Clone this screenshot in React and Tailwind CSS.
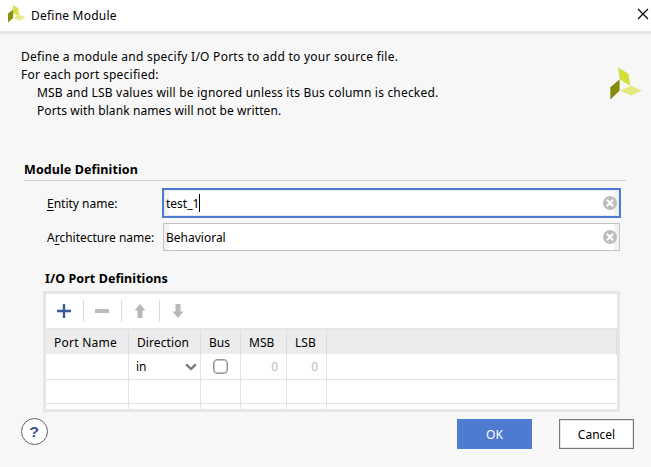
import React from "react";

function Logo({ className }) {
  return (
    <svg viewBox="0 0 33 33" className={className}>
      <polygon points="8,0.5 18.5,6.8 20.3,19 9.7,12.2" fill="#d5df3a" />
      <polygon points="0.3,20.2 9.6,12.6 9.6,23.8 0.3,32.4" fill="#848a0c" />
      <polygon points="10.2,23.6 21.2,18.8 32,23.6 21.2,28.8" fill="#e3e97c" />
    </svg>
  );
}

function TitleLogo() {
  return (
    <svg viewBox="0 0 19 18" className="h-[18px] w-[19px]">
      <polygon points="5.6,0 11.2,3 12.4,12 6.4,8.6" fill="#d9e04e" />
      <polygon points="1,8.6 6.2,4.6 6.2,12.9 1,17.4" fill="#8b910f" />
      <polygon points="6.2,12.8 12,9.2 18.8,12.4 12.4,15.8" fill="#e6eb92" />
    </svg>
  );
}

function ClearIcon() {
  return (
    <svg viewBox="0 0 14 14" className="size-3.5 shrink-0">
      <circle cx="7" cy="7" r="7" fill="#bdbdbd" />
      <path d="M3.8 3.8 10.2 10.2M10.2 3.8 3.8 10.2" stroke="#fff" strokeWidth="2" />
    </svg>
  );
}

function Tool({ children }) {
  return <div className="flex w-[37px] items-center justify-center pr-[2px]">{children}</div>;
}

const Sep = () => <div className="h-[22px] w-px shrink-0 bg-[#dadada]" />;

const COLS = "grid grid-cols-[83px_72px_40px_46px_40px_1fr]";
const HEAD = "border-r border-[#dedede]";
const CELL = "border-r border-b border-[#e4e4e4]";

export default function App() {
  return (
    <div className="flex h-[467px] w-[651px] flex-col overflow-hidden bg-[#f7f7f7] font-['Noto_Sans',sans-serif] text-[12px] leading-[18px] text-black">
      <header className="flex h-[34px] shrink-0 items-center border-b-[3px] border-[#e6e6e6] bg-white pr-[2px] pl-[7px]">
        <div className="mb-[3px]"><TitleLogo /></div>
        <span className="ml-[5px] tracking-[0.22px]">Define Module</span>
        <svg viewBox="0 0 12 12" className="mb-[3px] ml-auto size-3">
          <path d="M1 1 11 11M11 1 1 11" stroke="#000" strokeWidth="1.1" />
        </svg>
      </header>

      <section className="flex h-[126px] shrink-0 justify-between pt-[14px] pr-[8px] pl-[21px]">
        <div className="whitespace-nowrap">
          <p className="tracking-[0.255px]">Define a module and specify I/O Ports to add to your source file.</p>
          <p className="tracking-[0.25px]">For each port specified:</p>
          <p className="pl-4 tracking-[0.19px]">MSB and LSB values will be ignored unless its Bus column is checked.</p>
          <p className="pl-4 tracking-[0.1px]">Ports with blank names will not be written.</p>
        </div>
        <Logo className="mt-[19px] size-[33px]" />
      </section>

      <h2 className="mr-[25px] ml-6 h-[21px] shrink-0 border-b border-[#cfcfcf] pt-px text-[12.5px] font-bold tracking-[0.1px]">Module Definition</h2>

      <div className="mt-[7px] ml-[47px] flex h-[30px] shrink-0 items-center">
        <label className="w-[115px] pt-px"><u className="underline-offset-2">E</u>ntity name:</label>
        <div className="flex h-[30px] w-[459px] items-center border-2 border-[#4e7bd0] bg-white">
          <div className="flex h-[26px] w-full items-center justify-between border border-[#e4e7ef] bg-[linear-gradient(to_right,#f2f2f2_4px,#fff_4px,#fff_449px,#f2f2f2_449px)] pr-px pl-px">
            <span className="flex items-center"><span className="pt-[2px]">test_1</span><i className="h-[18px] w-px bg-black" /></span>
            <ClearIcon />
          </div>
        </div>
      </div>
      <div className="mt-[5px] ml-[47px] flex h-7 shrink-0 items-center">
        <label className="w-[116px] pt-[2px] whitespace-nowrap">A<u className="underline-offset-2">r</u>chitecture name:</label>
        <div className="flex h-7 w-[457px] items-center justify-between border border-[#c4c4c4] bg-[linear-gradient(to_right,#f2f2f2_5px,#fff_5px,#fff_450px,#f2f2f2_450px)] pr-[2px] pl-[2px]">
          <span className="pt-[2px]">Behavioral</span>
          <ClearIcon />
        </div>
      </div>

      <h3 className="mt-[19px] ml-[45px] h-[21px] shrink-0 text-[12.5px] font-bold tracking-[0.07px]">I/O Port Definitions</h3>

      <div className="ml-[43px] flex h-[121px] w-[577px] shrink-0 flex-col overflow-hidden border-[3px] border-[#e6e6e6] bg-white">
        <div className="flex h-9 shrink-0 items-center border-b-2 border-[#e6e6e6]">
          <Tool>
            <svg viewBox="0 0 14 14" className="size-3.5"><path d="M7 0V14M0 7H14" stroke="#3d5a99" strokeWidth="2.4" /></svg>
          </Tool>
          <Sep />
          <Tool>
            <svg viewBox="0 0 14 14" className="size-3.5"><path d="M0 7H14" stroke="#bcbcbc" strokeWidth="4" /></svg>
          </Tool>
          <Sep />
          <Tool>
            <svg viewBox="0 0 12 14" className="h-3.5 w-3"><path d="M6 0 11.5 6.5H8.5V14H3.5V6.5H.5Z" fill="#b8b8b8" /></svg>
          </Tool>
          <Sep />
          <Tool>
            <svg viewBox="0 0 12 14" className="h-3.5 w-3"><path d="M6 14 11.5 7.5H8.5V0H3.5V7.5H.5Z" fill="#b8b8b8" /></svg>
          </Tool>
        </div>
        <div className={`${COLS} h-6 shrink-0 bg-[#ececec] leading-[25px] whitespace-nowrap`}>
          <div className={`${HEAD} pl-2 tracking-[0.25px]`}>Port Name</div>
          <div className={`${HEAD} pl-2 tracking-[0.1px]`}>Direction</div>
          <div className={`${HEAD} pl-2`}>Bus</div>
          <div className={`${HEAD} pl-2`}>MSB</div>
          <div className={`${HEAD} pl-2`}>LSB</div>
          <div className={HEAD} />
        </div>
        <div className={`${COLS} h-[25px] shrink-0 leading-[25px]`}>
          <div className={CELL} />
          <div className={`${CELL} flex items-center justify-between pr-[3px] pl-[7px]`}>
            in
            <svg viewBox="0 0 12 8" className="h-2 w-3"><path d="M1.2 1.4 6 6 10.8 1.4" fill="none" stroke="#777" strokeWidth="2.3" /></svg>
          </div>
          <div className={`${CELL} flex items-center justify-center`}>
            <span className="size-[15px] rounded-[4px] border border-[#989898] bg-white shadow-[inset_0_0_0_1px_#c4c4c4]" />
          </div>
          <div className={`${CELL} pr-2 text-right text-[#bcbcbc]`}>0</div>
          <div className={`${CELL} pr-2 text-right text-[#bcbcbc]`}>0</div>
          <div className="border-b border-[#e4e4e4]" />
        </div>
        {[0, 1].map((row) => (
          <div key={row} className={`${COLS} h-[25px] shrink-0`}>
            {[0, 1, 2, 3, 4].map((c) => <div key={c} className={CELL} />)}
            <div className="border-b border-[#e4e4e4]" />
          </div>
        ))}
      </div>

      <footer className="mt-[6px] mr-[17px] ml-[21px] flex h-[31px] shrink-0 items-start pt-px">
        <button className="-mt-px flex size-[27px] items-center justify-center rounded-full border border-[#606060] bg-white font-['Liberation_Sans',sans-serif] text-[14px] font-bold text-[#3b5596]">
          <span className="scale-x-115">?</span>
        </button>
        <button className="ml-auto h-[30px] w-[75px] bg-[#4e7bd0] pt-[2px] text-white">OK</button>
        <button className="ml-[27px] h-[30px] w-[75px] border border-[#777] bg-white pt-[2px] shadow-[inset_0_0_0_1px_#e6e6e6]">Cancel</button>
      </footer>
    </div>
  );
}
